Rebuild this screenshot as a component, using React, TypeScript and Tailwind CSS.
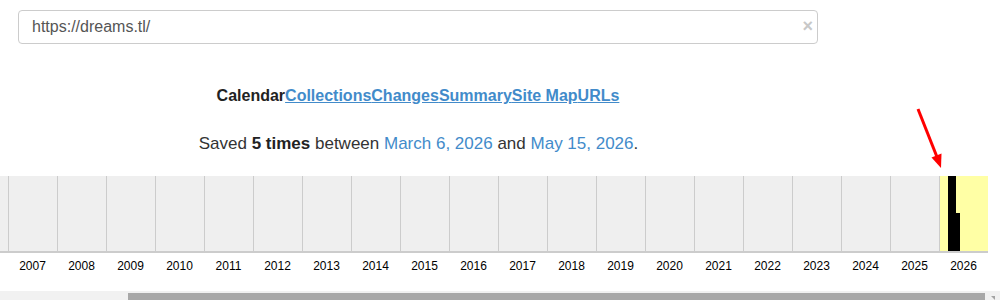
import React from "react";

const years = Array.from({ length: 21 }, (_, i) => 2006 + i);

export default function App() {
  return (
    <div
      className="relative w-[1000px] h-[300px] overflow-hidden bg-white text-[#333]"
      style={{ fontFamily: '"Liberation Sans", Arial, sans-serif' }}
    >
      <div className="w-[836px] pt-[10px] pl-[18px]">
        <div className="relative flex h-[34px] w-[800px] items-center rounded-[4px] border border-[#cccccc] pl-[13px] text-[16px] text-[#555]">
          https://dreams.tl/
          <span className="absolute right-[4px] top-[6px] text-[18px] font-bold leading-[18px] text-[#c8c8c8]">×</span>
        </div>
      </div>

      <div className="mt-[42px] flex w-[836px] justify-center text-[16px] font-bold leading-[20px]">
        <span className="text-[#222]">Calendar</span>
        <a className="text-[#428bca] underline">Collections</a>
        <a className="text-[#428bca] underline">Changes</a>
        <a className="text-[#428bca] underline">Summary</a>
        <a className="text-[#428bca] underline">Site Map</a>
        <a className="text-[#428bca] underline">URLs</a>
      </div>

      <div className="mt-[28px] flex w-[837px] justify-center text-[17px] leading-[20px] text-[#333]">
        <span>
          Saved <b className="text-[#222]">5 times</b> between{" "}
          <a className="text-[#428bca]">March 6, 2026</a> and{" "}
          <a className="text-[#428bca]">May 15, 2026</a>.
        </span>
      </div>

      <div className="mt-[22px] flex ml-[-41px]">
        {years.map((y) => (
          <div key={y} className="flex w-[49px] flex-col">
            {y === 2026 ? (
              <div className="relative h-[77px] border-l border-b-2 border-[#cccccc] bg-[#ffffa5]">
                <div className="absolute left-[8px] top-0 h-[75px] w-[8px] bg-black" />
                <div className="absolute left-[16px] top-[37px] h-[38px] w-[4px] bg-black" />
              </div>
            ) : (
              <div className="h-[77px] border-l border-b-2 border-[#cccccc] bg-[#efefef]" />
            )}
            <div className="h-[38px] pt-[5px] text-center text-[12px] leading-[16px] text-black">
              {y === 2006 ? "" : y}
            </div>
          </div>
        ))}
      </div>

      <div className="relative h-[17px] w-[1000px] bg-[#f1f1f1]">
        <div className="absolute left-[128px] top-[2px] h-[13px] w-[857px] bg-[#a8a8a8]" />
        <div className="absolute left-[991px] top-[5px] h-0 w-0 border-l-[4px] border-t-[4px] border-l-transparent border-t-[#a3a3a3]" />
      </div>

      <svg className="absolute left-0 top-0" width="1000" height="300" viewBox="0 0 1000 300">
        <line x1="918" y1="109" x2="937" y2="157" stroke="#ff0000" strokeWidth="3" />
        <polygon points="941,168 931.5,157.5 941.5,153.5" fill="#ff0000" />
      </svg>
    </div>
  );
}
